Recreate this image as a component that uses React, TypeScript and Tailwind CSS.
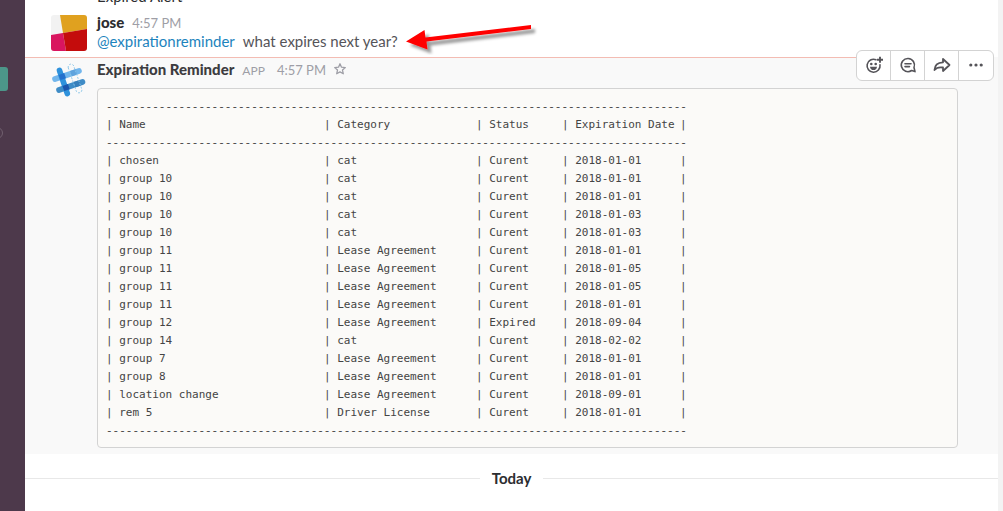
import React from 'react';

interface Reminder {
    name: string;
    category: string;
    status: string;
    date: string;
}

const reminders: Reminder[] = [
    { name: 'chosen', category: 'cat', status: 'Curent', date: '2018-01-01' },
    { name: 'group 10', category: 'cat', status: 'Curent', date: '2018-01-01' },
    { name: 'group 10', category: 'cat', status: 'Curent', date: '2018-01-01' },
    { name: 'group 10', category: 'cat', status: 'Curent', date: '2018-01-03' },
    { name: 'group 10', category: 'cat', status: 'Curent', date: '2018-01-03' },
    { name: 'group 11', category: 'Lease Agreement', status: 'Curent', date: '2018-01-01' },
    { name: 'group 11', category: 'Lease Agreement', status: 'Curent', date: '2018-01-05' },
    { name: 'group 11', category: 'Lease Agreement', status: 'Curent', date: '2018-01-05' },
    { name: 'group 11', category: 'Lease Agreement', status: 'Curent', date: '2018-01-01' },
    { name: 'group 12', category: 'Lease Agreement', status: 'Expired', date: '2018-09-04' },
    { name: 'group 14', category: 'cat', status: 'Curent', date: '2018-02-02' },
    { name: 'group 7', category: 'Lease Agreement', status: 'Curent', date: '2018-01-01' },
    { name: 'group 8', category: 'Lease Agreement', status: 'Curent', date: '2018-01-01' },
    { name: 'location change', category: 'Lease Agreement', status: 'Curent', date: '2018-09-01' },
    { name: 'rem 5', category: 'Driver License', status: 'Curent', date: '2018-01-01' },
];

const DashRow: React.FC = () => (
    <tr>
        <td colSpan={5} className="p-0 whitespace-pre font-['Liberation_Mono',monospace]">{'-'.repeat(88)}</td>
    </tr>
);

const ReminderTable: React.FC = () => (
    <div className="rounded border border-[#d3d3d3] bg-[#fbfaf8] px-2 pt-[9px] pb-[7px] text-[#444444]">
        <table className="table-fixed w-[581px] border-collapse text-left text-[11px] leading-[18px] font-['DejaVu_Sans_Mono',monospace]">
            <colgroup>
                <col className="w-[218px]" />
                <col className="w-[152px]" />
                <col className="w-[86px]" />
                <col className="w-[118px]" />
                <col className="w-[7px]" />
            </colgroup>
            <thead>
                <DashRow />
                <tr className="whitespace-pre">
                    <th className="p-0 font-normal">| Name</th>
                    <th className="p-0 font-normal">| Category</th>
                    <th className="p-0 font-normal">| Status</th>
                    <th className="p-0 font-normal">| Expiration Date</th>
                    <th className="p-0 font-normal">|</th>
                </tr>
                <DashRow />
            </thead>
            <tbody>
                {reminders.map((item, index) => (
                    <tr key={index} className="whitespace-pre">
                        <td className="p-0">| {item.name}</td>
                        <td className="p-0">| {item.category}</td>
                        <td className="p-0">| {item.status}</td>
                        <td className="p-0">| {item.date}</td>
                        <td className="p-0">|</td>
                    </tr>
                ))}
                <DashRow />
            </tbody>
        </table>
    </div>
);

const JoseAvatar: React.FC = () => (
    <svg className="h-9 w-9 rounded-[3px]" viewBox="0 0 36 36" aria-hidden="true">
        <rect width="36" height="36" fill="#f2f2f2" />
        <path d="M9 0H36V14L12 18Z" fill="#e0a11f" />
        <path d="M0 20L12 18L15 36H0Z" fill="#d9155f" />
        <path d="M12 18L36 14V36H15Z" fill="#c40c0c" />
    </svg>
);

const AppAvatar: React.FC = () => (
    <svg className="h-9 w-9" viewBox="0 0 36 36" fill="none" strokeLinecap="round" aria-hidden="true">
        <path d="M4 17L28 9" stroke="#72b6ec" strokeWidth="5.6" />
        <path d="M8 28L31.5 20" stroke="#3f8cc6" strokeWidth="5.6" />
        <path d="M8.5 8.5L16.3 31.5" stroke="#2f92dc" strokeWidth="5.6" />
        <path d="M7.7 12.9L13.2 11L15 16.2L9.500 18.1Z" fill="#2470cc" />
        <path d="M11.400 23.900L16.900 22L18.700 27.200L13.200 29.100Z" fill="#1c55ac" />
        <path d="M19 9L24.500 7.200L26.3 12.500L20.800 14.300Z" fill="#5fa3dd" />
        <path d="M22.700 20L28.200 18.200L30 23.500L24.500 25.300Z" fill="#377fba" />
        <path d="M17.300 6a2.900 2.900 0 0 1 5.500-1.900L30.700 27a2.900 2.900 0 0 1-5.500 1.900Z" stroke="#86c3e6" strokeWidth="0.9" strokeLinecap="butt" strokeDasharray="2 1.4" />
    </svg>
);

const ReactionIcon: React.FC = () => (
    <svg className="h-5 w-5" viewBox="0 0 20 20" fill="none" stroke="currentColor" strokeWidth="1.6" aria-hidden="true">
        <path d="M12 3.7A6.5 6.5 0 1 0 16 8.8" strokeLinecap="round" />
        <path d="M16 0.7V6.7M13 3.7H19" strokeWidth="1.9" />
        <circle cx="7.3" cy="8" r="1.3" fill="currentColor" stroke="none" />
        <circle cx="11.7" cy="8" r="1.3" fill="currentColor" stroke="none" />
        <path d="M6 10.7H13C12.8 15.2 6.2 15.2 6 10.7Z" fill="currentColor" stroke="none" />
    </svg>
);

const ThreadIcon: React.FC = () => (
    <svg className="h-5 w-5" viewBox="0 0 20 20" fill="none" stroke="currentColor" strokeWidth="1.6" strokeLinejoin="round" aria-hidden="true">
        <path d="M13.6 14.5A6.6 6.6 0 1 1 16 11.5L17 15.6Z" />
        <path d="M7 7.8H13M7 10.6H11.5" strokeLinecap="round" />
    </svg>
);

const ShareIcon: React.FC = () => (
    <svg className="h-5 w-5" viewBox="0 0 20 20" fill="none" stroke="currentColor" strokeWidth="1.8" strokeLinejoin="round" aria-hidden="true">
        <path d="M11 3L17.500 9L11 15V11.500C7 10.8 4.5 11.5 2.5 14C2.7 9.300 5.500 6.500 11 6.300Z" />
    </svg>
);

const MoreIcon: React.FC = () => (
    <svg className="h-5 w-5" viewBox="0 0 20 20" fill="currentColor" aria-hidden="true">
        <circle cx="4.8" cy="9" r="1.6" />
        <circle cx="10" cy="9" r="1.6" />
        <circle cx="15.2" cy="9" r="1.6" />
    </svg>
);

const StarIcon: React.FC = () => (
    <svg className="h-3 w-3" viewBox="0 0 12 12" fill="none" stroke="currentColor" strokeWidth="1.3" strokeLinejoin="round" aria-hidden="true">
        <path d="M6 0.8L7.5 4.2L11.3 4.6L8.5 7.1L9.3 10.8L6 8.9L2.7 10.8L3.5 7.1L0.7 4.6L4.5 4.2Z" />
    </svg>
);

const MessageActions: React.FC = () => (
    <div className="absolute -top-[7px] right-1 flex h-[31px] divide-x divide-[#d3d3d3] overflow-hidden rounded-md border border-[#d3d3d3] bg-white text-[#555459]">
        <button type="button" aria-label="Add reaction" className="flex w-[34px] items-center justify-center"><ReactionIcon /></button>
        <button type="button" aria-label="Start a thread" className="flex w-[34px] items-center justify-center"><ThreadIcon /></button>
        <button type="button" aria-label="Share message" className="flex w-[34px] items-center justify-center"><ShareIcon /></button>
        <button type="button" aria-label="More actions" className="flex w-[34px] items-center justify-center"><MoreIcon /></button>
    </div>
);

const PointerArrow: React.FC = () => (
    <svg className="absolute left-full top-0 ml-2 -mt-5 h-11 w-[136px]" viewBox="0 0 136 44" aria-hidden="true">
        <defs>
            <filter id="arrow-shadow" x="-10%" y="-20%" width="120%" height="160%">
                <feDropShadow dx="4" dy="4" stdDeviation="1.5" floodColor="#000000" floodOpacity="0.4" />
            </filter>
        </defs>
        <path d="M0 30.5L18.5 19L19.5 26.5L125 14V18L20.5 30.5L21.5 38.5Z" fill="#ff0000" filter="url(#arrow-shadow)" />
    </svg>
);

const App: React.FC = () => {
    return (
        <div className="flex h-screen overflow-hidden bg-white font-['Lato',sans-serif] text-[15px] leading-5 text-[#2c2d30]">
            <aside className="w-[25px] shrink-0 overflow-hidden bg-[#4d394b] pt-[67px]">
                <div className="h-6 w-2 rounded-r-[3px] bg-[#4c9689]" />
                <div className="mt-9 -ml-[9px] h-3 w-3 rounded-full border border-[#71606f]" />
            </aside>

            <main className="min-w-0 flex-1">
                <div className="h-3 overflow-hidden pl-[72px]">
                    <p className="-mt-[14px]">Expired Alert</p>
                </div>

                <article className="flex h-[45px] gap-[10px] pl-[26px]">
                    <div className="pt-[3px]"><JoseAvatar /></div>
                    <div>
                        <div className="flex h-[19px] items-baseline gap-2">
                            <span className="font-black">jose</span>
                            <time className="text-[13px] text-[#9e9ea6]">4:57 PM</time>
                        </div>
                        <p className="relative w-max">
                            <a href="#expirationreminder" className="text-[#1d84bd]">@expirationreminder</a>
                            <span className="ml-2 text-[#555459]">what expires next year?</span>
                            <PointerArrow />
                        </p>
                    </div>
                </article>

                <article className="relative flex gap-[10px] bg-[#f9f9f9] pr-10 pb-[6px] pl-[26px]">
                    <div className="absolute top-0 left-0 right-[142px] h-px bg-[#f3bcb3]" />
                    <MessageActions />
                    <div className="pt-[5px]"><AppAvatar /></div>
                    <div className="min-w-0 flex-1 pt-[2px]">
                        <div className="mb-2 flex items-baseline gap-2 text-[#9e9ea6]">
                            <span className="font-black text-[#3d3c40]">Expiration Reminder</span>
                            <span className="text-xs">APP</span>
                            <time className="ml-1 text-[13px]">4:57 PM</time>
                            <button type="button" aria-label="Star this message"><StarIcon /></button>
                        </div>
                        <ReminderTable />
                    </div>
                </article>

                <div className="mt-[14px] flex items-center gap-3">
                    <div className="h-px flex-1 bg-[#e8e8e8]" />
                    <h2 className="font-bold">Today</h2>
                    <div className="h-px flex-1 bg-[#e8e8e8]" />
                </div>
            </main>

            <div className="w-[5px] shrink-0 bg-[#f3f3f3]" />
        </div>
    );
};

export default App;
